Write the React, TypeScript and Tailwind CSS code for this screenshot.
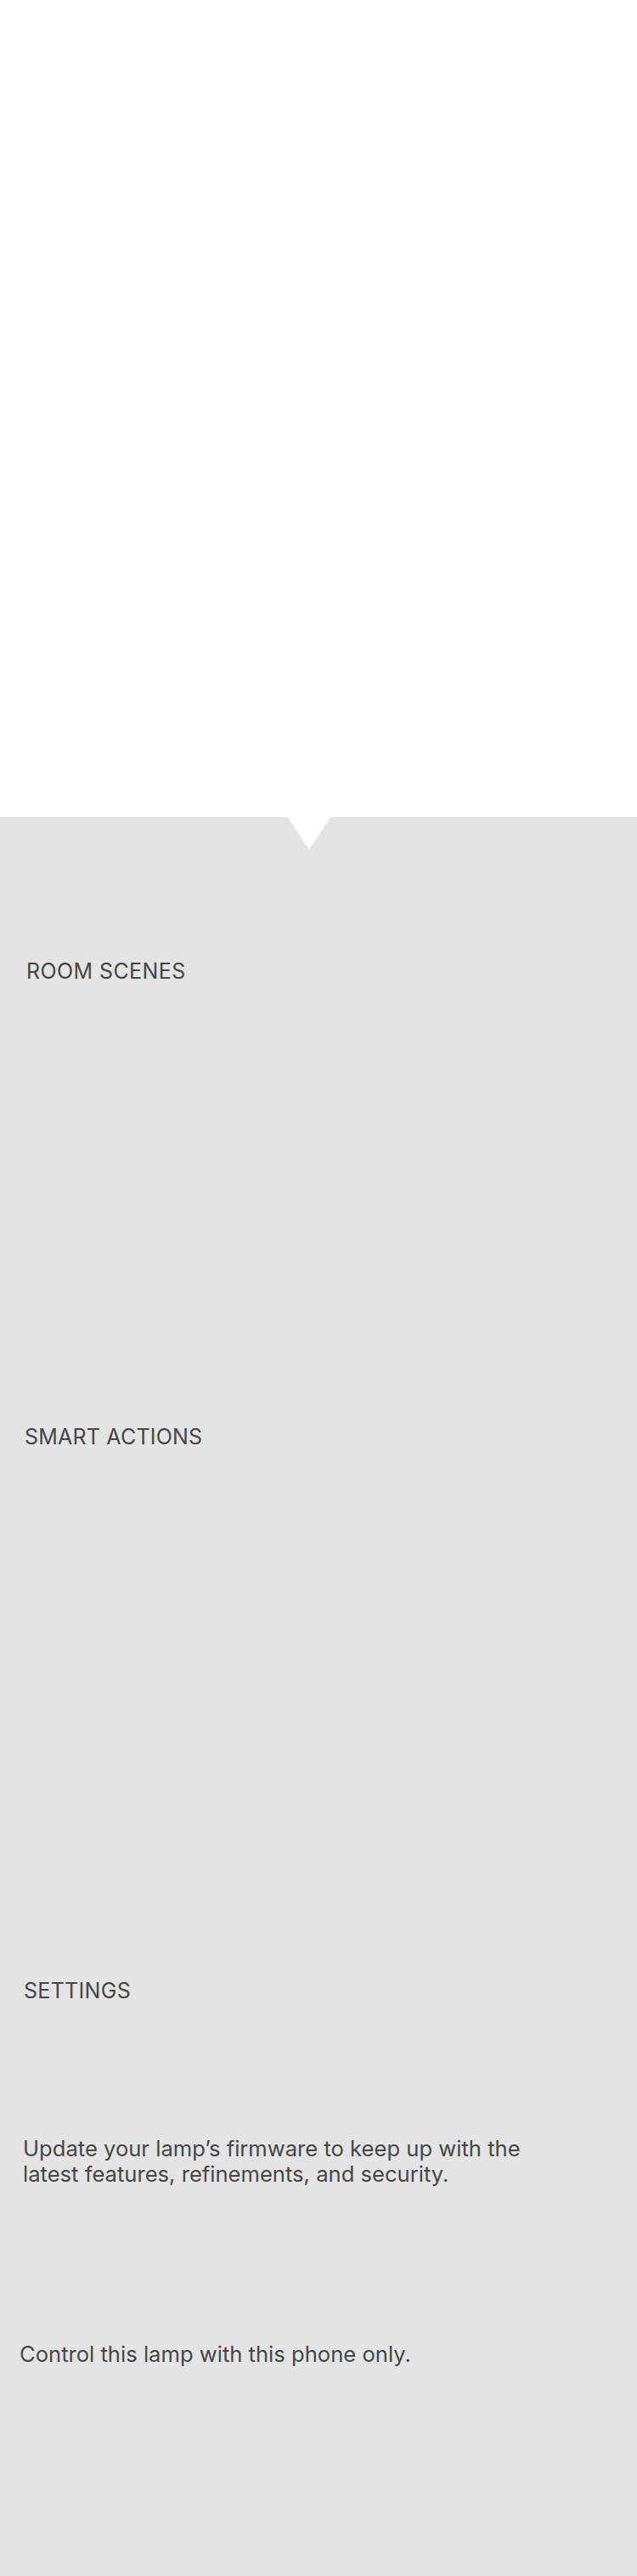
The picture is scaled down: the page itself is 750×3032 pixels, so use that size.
import React from "react";

const font = { fontFamily: "Inter, 'Noto Sans', sans-serif" };

export default function App() {
  return (
    <div className="w-[750px] h-[3032px] bg-[#e4e4e4] text-[#474747]" style={font}>
      <div className="h-[962px] bg-white" />
      <div className="relative">
        <svg
          className="absolute left-[339px] top-0"
          width="50"
          height="38"
          viewBox="0 0 50 38"
        >
          <polygon points="0,0 50,0 25,38" fill="#ffffff" />
        </svg>
        <div className="pt-[166px] pl-[31px] text-[25px] leading-[30px] tracking-[0.4px]">
          ROOM SCENES
        </div>
        <div className="mt-[518px] pl-[29px] text-[25px] leading-[30px] tracking-[0.2px]">
          SMART ACTIONS
        </div>
        <div className="mt-[622px] pl-[28px] text-[25px] leading-[30px] tracking-[0.3px]">
          SETTINGS
        </div>
        <div className="mt-[156px] pl-[27px] w-[660px] text-[25.6px] leading-[30px]">
          Update your lamp’s firmware to keep up with the latest features, refinements, and security.
        </div>
        <div className="mt-[182px] pl-[23px] text-[25.6px] leading-[30px]">
          Control this lamp with this phone only.
        </div>
      </div>
    </div>
  );
}
